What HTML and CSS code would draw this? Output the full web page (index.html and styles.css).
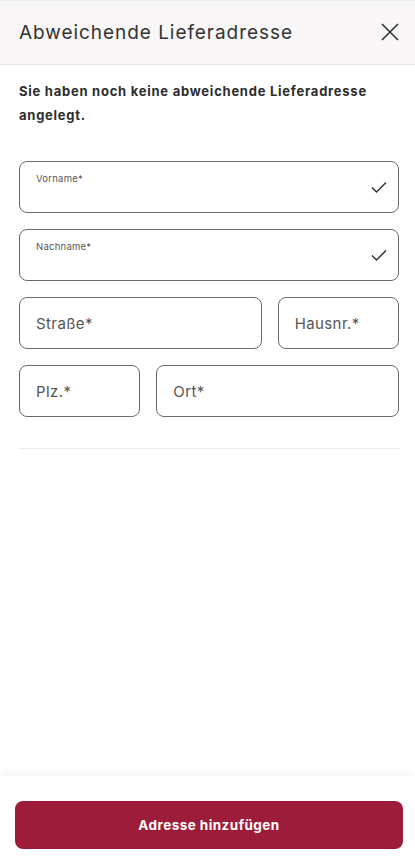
FILE: index.html
```html
<!DOCTYPE html>
<html lang="de">
<head>
<meta charset="utf-8">
<title>Abweichende Lieferadresse</title>
<link rel="stylesheet" href="styles.css">
</head>
<body>
<div class="sheet">
  <header class="head">
    <h1 class="title">Abweichende Lieferadresse</h1>
    <button class="close" aria-label="Schließen">
      <svg width="18" height="18" viewBox="0 0 18 18"><path d="M1 1L17 17M17 1L1 17" stroke="#333" stroke-width="1.6" fill="none"/></svg>
    </button>
  </header>
  <main class="body">
    <p class="note">Sie haben noch keine abweichende Lieferadresse angelegt.</p>
    <form class="form">
      <div class="field filled">
        <span class="label">Vorname*</span>
        <svg class="check" width="16" height="13" viewBox="0 0 16 13"><path d="M1 6.5L5.5 11L15 1.5" stroke="#333" stroke-width="1.5" fill="none"/></svg>
      </div>
      <div class="field filled">
        <span class="label">Nachname*</span>
        <svg class="check" width="16" height="13" viewBox="0 0 16 13"><path d="M1 6.5L5.5 11L15 1.5" stroke="#333" stroke-width="1.5" fill="none"/></svg>
      </div>
      <div class="row row-street">
        <div class="field"><span class="ph">Straße*</span></div>
        <div class="field"><span class="ph">Hausnr.*</span></div>
      </div>
      <div class="row row-city">
        <div class="field"><span class="ph">Plz.*</span></div>
        <div class="field"><span class="ph">Ort*</span></div>
      </div>
    </form>
    <hr class="divider">
  </main>
  <footer class="foot">
    <button class="submit">Adresse hinzufügen</button>
  </footer>
</div>
</body>
</html>
```
FILE: styles.css
```css
* { box-sizing: border-box; }
html, body { margin: 0; padding: 0; background: #fff; }
body {
  font-family: Inter, "Noto Sans", "Liberation Sans", sans-serif;
  color: #333;
}
.sheet {
  display: flex;
  flex-direction: column;
  height: 862px;
}
.head {
  height: 65px;
  background: #f8f6f6;
  border-top: 1px solid #ececec;
  border-bottom: 1px solid #e6e3e3;
  display: flex;
  align-items: center;
  justify-content: space-between;
  padding: 0 15px 0 19px;
}
.title {
  margin: 0;
  font-size: 19px;
  font-weight: 400;
  color: #333;
  letter-spacing: 0.95px;
}
.close {
  background: none;
  border: 0;
  padding: 0;
  width: 20px;
  height: 20px;
  display: flex;
  align-items: center;
  justify-content: center;
  margin-bottom: 2px;
}
.body {
  flex: 1;
  padding: 0 16px 0 19px;
}
.note {
  margin: 14px 0 0;
  font-size: 13px;
  font-weight: 700;
  line-height: 24px;
  color: #2d2d2d;
  letter-spacing: 0.75px;
}
.form {
  margin-top: 34px;
  display: flex;
  flex-direction: column;
  gap: 16px;
}
.field {
  height: 52px;
  border: 1px solid #6a6a6a;
  border-radius: 8px;
  position: relative;
  display: flex;
  align-items: center;
  padding: 0 16px;
}
.filled { align-items: flex-start; }
.label {
  font-size: 9.5px;
  color: #555;
  margin-top: 11px;
  letter-spacing: 0.25px;
}
.check {
  position: absolute;
  right: 11px;
  top: 19px;
}
.ph {
  font-size: 15px;
  color: #555;
  letter-spacing: 0.4px;
}
.row {
  display: grid;
  gap: 16px;
}
.row-street { grid-template-columns: 2fr 1fr; }
.row-city { grid-template-columns: 1fr 2fr; }
.divider {
  margin: 31px 0 0;
  border: 0;
  border-top: 1px solid #ececec;
}
.foot {
  height: 86px;
  padding: 25px 12px 0 15px;
  box-shadow: 0 -3px 8px rgba(0, 0, 0, 0.05);
  background: #fff;
}
.submit {
  width: 100%;
  height: 48px;
  border: 0;
  border-radius: 8px;
  background: #9c1c3a;
  color: #fff;
  font-family: Inter, "Noto Sans", "Liberation Sans", sans-serif;
  font-size: 13.5px;
  font-weight: 700;
  letter-spacing: 0.45px;
}
```
